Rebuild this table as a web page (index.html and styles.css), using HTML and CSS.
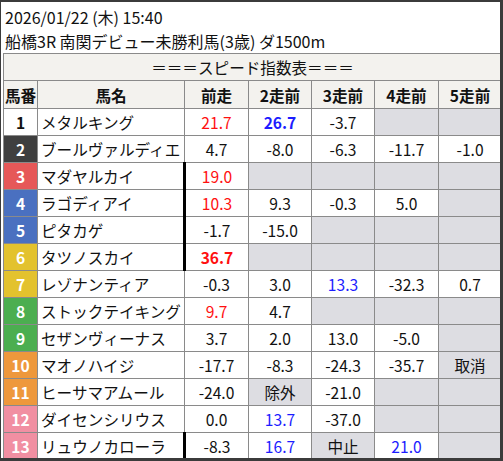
FILE: index.html
```html
<!DOCTYPE html>
<html lang="ja">
<head>
<meta charset="utf-8">
<link rel="stylesheet" href="styles.css">
</head>
<body>
<div class="frame">
  <div class="title">
    <div class="line">2026/01/22 (木) 15:40</div>
    <div class="line">船橋3R 南関デビュー未勝利馬(3歳) ダ1500m</div>
  </div>
  <table class="speed">
    <colgroup>
      <col class="c-no"><col class="c-name"><col class="c-v1"><col class="c-v"><col class="c-v"><col class="c-v4"><col class="c-v5">
    </colgroup>
    <thead>
      <tr><th colspan="7" class="band">＝＝＝スピード指数表＝＝＝</th></tr>
      <tr class="head"><th>馬番</th><th>馬名</th><th>前走</th><th>2走前</th><th>3走前</th><th>4走前</th><th>5走前</th></tr>
    </thead>
    <tbody>
      <tr><td class="no w1">1</td><td class="name">メタルキング</td><td class="red">21.7</td><td class="blue bold">26.7</td><td>-3.7</td><td class="na"></td><td class="na"></td></tr>
      <tr><td class="no w2">2</td><td class="name">ブールヴァルディエ</td><td>4.7</td><td>-8.0</td><td>-6.3</td><td>-11.7</td><td>-1.0</td></tr>
      <tr><td class="no w3">3</td><td class="name">マダヤルカイ</td><td class="red gap">19.0</td><td class="na"></td><td class="na"></td><td class="na"></td><td class="na"></td></tr>
      <tr><td class="no w4">4</td><td class="name">ラゴディアイ</td><td class="red gap">10.3</td><td>9.3</td><td>-0.3</td><td>5.0</td><td class="na"></td></tr>
      <tr><td class="no w4">5</td><td class="name">ピタカゲ</td><td class="gap">-1.7</td><td>-15.0</td><td class="na"></td><td class="na"></td><td class="na"></td></tr>
      <tr><td class="no w6">6</td><td class="name">タツノスカイ</td><td class="red bold gap">36.7</td><td class="na"></td><td class="na"></td><td class="na"></td><td class="na"></td></tr>
      <tr><td class="no w6">7</td><td class="name">レゾナンティア</td><td>-0.3</td><td>3.0</td><td class="blue">13.3</td><td>-32.3</td><td>0.7</td></tr>
      <tr><td class="no w8">8</td><td class="name">ストックテイキング</td><td class="red">9.7</td><td>4.7</td><td class="na"></td><td class="na"></td><td class="na"></td></tr>
      <tr><td class="no w8">9</td><td class="name">セザンヴィーナス</td><td>3.7</td><td>2.0</td><td>13.0</td><td>-5.0</td><td class="na"></td></tr>
      <tr><td class="no w10">10</td><td class="name">マオノハイジ</td><td>-17.7</td><td>-8.3</td><td>-24.3</td><td>-35.7</td><td class="na">取消</td></tr>
      <tr><td class="no w10">11</td><td class="name">ヒーサマアムール</td><td>-24.0</td><td class="na">除外</td><td>-21.0</td><td class="na"></td><td class="na"></td></tr>
      <tr><td class="no w12">12</td><td class="name">ダイセンシリウス</td><td>0.0</td><td class="blue">13.7</td><td>-37.0</td><td class="na"></td><td class="na"></td></tr>
      <tr><td class="no w12">13</td><td class="name">リュウノカローラ</td><td class="gap">-8.3</td><td class="blue">16.7</td><td class="na">中止</td><td class="blue">21.0</td><td class="na"></td></tr>
    </tbody>
  </table>
</div>
</body>
</html>
```
FILE: styles.css
```css
html, body {
  margin: 0;
  padding: 0;
  background: #ffffff;
}
body {
  font-family: "Noto Sans CJK JP", "Noto Sans", sans-serif;
  color: #111;
}
.frame {
  box-sizing: border-box;
  width: 503px;
  height: 461px;
  border-top: 2px solid #3b3b3b;
  border-left: 1px solid #3b3b3b;
  border-right: 3px solid #3b3b3b;
  border-bottom: 3px solid #3b3b3b;
  overflow: hidden;
  background: #fff;
}
.title {
  padding: 3px 0 0 4px;
  height: 48px;
  font-size: 16px;
}
.title .line {
  height: 24px;
  line-height: 24px;
  white-space: nowrap;
}
.speed {
  border-collapse: collapse;
  table-layout: fixed;
  width: 498px;
  margin-left: 2px;
  font-size: 15.6px;
}
.c-no { width: 34px; }
.c-name { width: 147px; }
.c-v1 { width: 64px; }
.c-v { width: 63px; }
.c-v4 { width: 64px; }
.c-v5 { width: 63px; }
.speed th, .speed td {
  border: 1px solid #8a8a8a;
  padding: 0;
  text-align: center;
  white-space: nowrap;
  overflow: hidden;
}
.speed td {
  height: 26px;
  line-height: 26px;
}
.band {
  height: 26px;
  background: #f3f2ee;
  font-weight: normal;
}
.head th {
  height: 27px;
  background: #f3f2ee;
  font-weight: bold;
}
.speed td.name {
  text-align: left;
  padding-left: 3px;
}
.no {
  font-weight: bold;
  color: #fff;
}
.w1 { background: #fff; color: #111; }
.w2 { background: #3f3f3f; }
.w3 { background: #e65858; }
.w4 { background: #4a70c0; }
.w6 { background: #e3c22e; }
.w8 { background: #4cae50; }
.w10 { background: #ee983c; }
.w12 { background: #f18fa2; }
.na { background: #dddde2; }
.red { color: #ff1010; }
.blue { color: #1c1cff; }
.bold { font-weight: bold; }
.speed td.gap { border-left: 3px solid #000; }
```
